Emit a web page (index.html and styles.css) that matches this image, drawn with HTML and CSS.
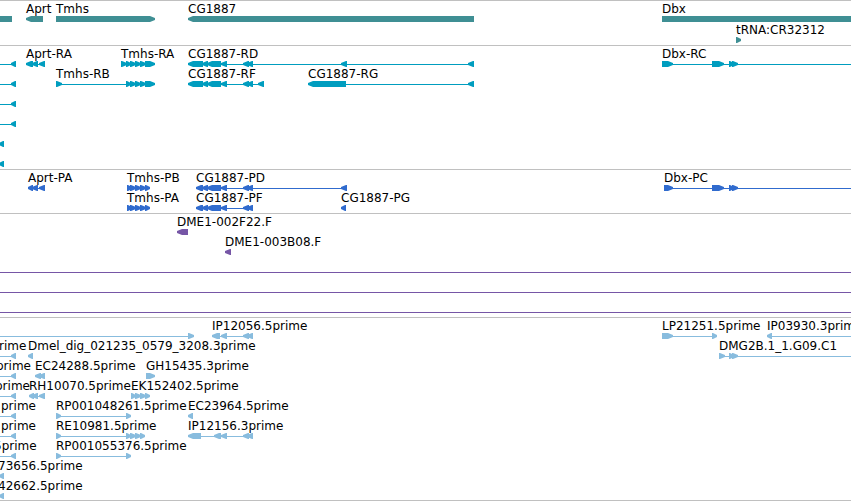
FILE: index.html
```html
<!DOCTYPE html>
<html lang="en">
<head>
    <meta charset="UTF-8">
    <meta name="viewport" content="width=device-width, initial-scale=1.0">
    <link rel="stylesheet" href="styles.css">
    <title>Genome Browser</title>
</head>
<body>

    <!-- One section per track, rows are filled in by the script -->
    <main class="browser">
        <section class="track genes" id="genes"></section>
        <section class="track transcripts" id="transcripts"></section>
        <section class="track proteins" id="proteins"></section>
        <section class="track clones" id="clones"></section>
        <section class="track ests" id="ests"></section>
    </main>

    <script src="tracks.js"></script>

</body>
</html>
```
FILE: styles.css
```css
body {
    margin: 0;
    background-color: white;
    color: black;
    font-family: 'DejaVu Sans', sans-serif;
    font-size: 12px;
}

.browser {
    overflow: hidden;
    border-bottom: 1px solid #c0c0c0;
}

/* Tracks */
.track {
    display: flex;
    flex-direction: column;
    padding: 1px 0 2px;
    border-top: 1px solid #c0c0c0;
}

.genes {
    gap: 1px;
    color: #3f8f94;
}

.transcripts {
    color: #009dbf;
}

.proteins {
    color: #306bce;
}

.clones {
    color: #7656a6;
}

.ests {
    padding-bottom: 1px;
    color: #88bcde;
}

/* A row is a line of labels with the features under it */
.row {
    position: relative;
}

.labels {
    height: 14px;
    line-height: 14px;
}

.label {
    position: absolute;
    top: 0;
    color: black;
    white-space: nowrap;
}

.features {
    display: block;
    width: 100%;
    height: 6px;
    fill: currentColor;
}
```
FILE: tracks.js
```javascript
const SVG = 'http://www.w3.org/2000/svg';
const FAR = 4000; // feature continues past the right edge

// Exons shared by several features
const left = [[11, 16]];
const edge = [[-1, 4]];
const tmhs = [[126, 131], [130, 136], [135, 141], [140, 146], [145, 155]];
const tmhsCds = [[127, 132], [130, 136], [135, 141], [140, 146], [145, 150]];
const cg = [[202, 208], [207, 221], [221, 227], [243, 249], [247, 253]];
const dbx = [[712, 724], [729, 734], [732, 738]];

// [label, label x, strand, exons, line from, line to]
const tracks = {
    genes: [
        [
            ['', 0, '-', [[-20, 12]]],
            ['Aprt', 26, '-', [[26, 43]]],
            ['Tmhs', 56, '+', [[56, 155]]],
            ['CG1887', 188, '-', [[188, 474]]],
            ['Dbx', 662, '+', [[662, FAR]]]
        ],
        [['tRNA:CR32312', 736, '+', [[736, 741]]]]
    ],
    transcripts: [
        [
            ['', 0, '-', left, -20, 16],
            ['Aprt-RA', 26, '-', [[26, 33], [32, 38], [39, 45]]],
            ['Tmhs-RA', 121, '+', [[121, 127], ...tmhs]],
            ['CG1887-RD', 188, '-', [[188, 203], ...cg, [341, 347], [468, 474]]],
            ['Dbx-RC', 662, '+', [[662, 673], ...dbx], 662, FAR]
        ],
        [
            ['', 0, '-', left, -20, 16],
            ['Tmhs-RB', 56, '+', [[56, 62], ...tmhs]],
            ['CG1887-RF', 188, '-', [[188, 203], ...cg, [258, 264]]],
            ['CG1887-RG', 308, '-', [[308, 346], [468, 474]]]
        ],
        [['', 0, '-', left, -20, 16]],
        [['', 0, '-', left, -20, 16]],
        [['', 0, '-', edge]],
        [['', 0, '-', edge]]
    ],
    proteins: [
        [
            ['Aprt-PA', 28, '-', [[28, 33], [32, 38], [39, 45]]],
            ['Tmhs-PB', 127, '+', tmhsCds],
            ['CG1887-PD', 196, '-', [[196, 203], ...cg, [341, 347]]],
            ['Dbx-PC', 664, '+', [[664, 673], ...dbx], 664, FAR]
        ],
        [
            ['Tmhs-PA', 127, '+', tmhsCds],
            ['CG1887-PF', 196, '-', [[196, 203], ...cg]],
            ['CG1887-PG', 341, '-', [[341, 346]]]
        ]
    ],
    clones: [
        [['DME1-002F22.F', 177, '-', [[177, 188]]]],
        [['DME1-003B08.F', 225, '-', [[225, 231]]]],
        [['', 0, '+', [], 0, FAR]],
        [['', 0, '+', [], 0, FAR]],
        [['', 0, '+', [], 0, FAR]]
    ],
    ests: [
        [
            ['', 0, '+', [[188, 194]], 0, 193],
            ['IP12056.5prime', 212, '-', [[212, 220], [221, 227], [243, 249], [247, 253]]],
            ['LP21251.5prime', 662, '+', [[662, 673], [712, 717]]],
            ['IP03930.3prime', 767, '-', [[767, 772]], 767, FAR]
        ],
        [
            ['rime', -1, '-', left, -20, 16],
            ['Dmel_dig_021235_0579_3208.3prime', 28, '-', [[28, 33]]],
            ['DMG2B.1_1.G09.C1', 719, '+', [[719, 725], [729, 734], [732, 738]], 719, FAR]
        ],
        [
            ['prime', -4, '-', left, -20, 16],
            ['EC24288.5prime', 35, '-', [[35, 41], [39, 45]]],
            ['GH15435.3prime', 146, '+', [[146, 155]]]
        ],
        [
            ['prime', -5, '-', left, -20, 16],
            ['RH10070.5prime', 29, '-', [[29, 34], [32, 38], [39, 45]]],
            ['EK152402.5prime', 131, '+', [[131, 136], [135, 141], [140, 146], [145, 150]]]
        ],
        [
            ['prime', 1, '-', left, -20, 16],
            ['RP001048261.5prime', 56, '+', [[56, 61], [126, 131]]],
            ['EC23964.5prime', 188, '-', [[188, 193]]]
        ],
        [
            ['prime', 1, '-', left, -20, 16],
            ['RE10981.5prime', 56, '+', [[56, 61], [126, 131], [130, 136], [135, 141], [140, 145]]],
            ['IP12156.3prime', 188, '-', [[188, 201], [214, 221], [221, 227], [243, 249], [247, 253]]]
        ],
        [
            ['5prime', -6, '-', left, -20, 16],
            ['RP001055376.5prime', 56, '+', [[56, 61], [126, 131]]]
        ],
        [['73656.5prime', -2, '-', edge]],
        [['42662.5prime', -2, '-', edge]]
    ]
};

// Exon box with a blunt arrow head on the side of its strand
function drawExon(svg, start, end, strand) {
    const head = Math.min(5, end - start - 1);
    const points = strand === '+'
        ? [[start, 0], [end - head, 0], [end, 2], [end, 4], [end - head, 6], [start, 6]]
        : [[end, 0], [start + head, 0], [start, 2], [start, 4], [start + head, 6], [end, 6]];
    const exon = document.createElementNS(SVG, 'polygon');
    exon.setAttribute('points', points.join(' '));
    svg.appendChild(exon);
}

// Thin line that joins the exons
function drawLine(svg, start, end) {
    const line = document.createElementNS(SVG, 'rect');
    line.setAttribute('x', start);
    line.setAttribute('y', 3);
    line.setAttribute('width', end - start);
    line.setAttribute('height', 1);
    svg.appendChild(line);
}

function drawRow(track, features) {
    const row = document.createElement('div');
    row.className = 'row';
    const labels = document.createElement('div');
    labels.className = 'labels';
    const svg = document.createElementNS(SVG, 'svg');
    svg.setAttribute('class', 'features');

    features.forEach(([name, x, strand, exons, from, to]) => {
        if (name) {
            const label = document.createElement('span');
            label.className = 'label';
            label.style.left = x + 'px';
            label.textContent = name;
            labels.appendChild(label);
        }
        if (from !== undefined) {
            drawLine(svg, from, to);
        } else if (exons.length > 1) {
            drawLine(svg, exons[0][0] + 2, exons[exons.length - 1][1] - 2);
        }
        exons.forEach(([start, end]) => drawExon(svg, start, end, strand));
    });

    row.append(labels, svg);
    track.appendChild(row);
}

Object.keys(tracks).forEach(id => {
    const track = document.getElementById(id);
    tracks[id].forEach(features => drawRow(track, features));
});
```
